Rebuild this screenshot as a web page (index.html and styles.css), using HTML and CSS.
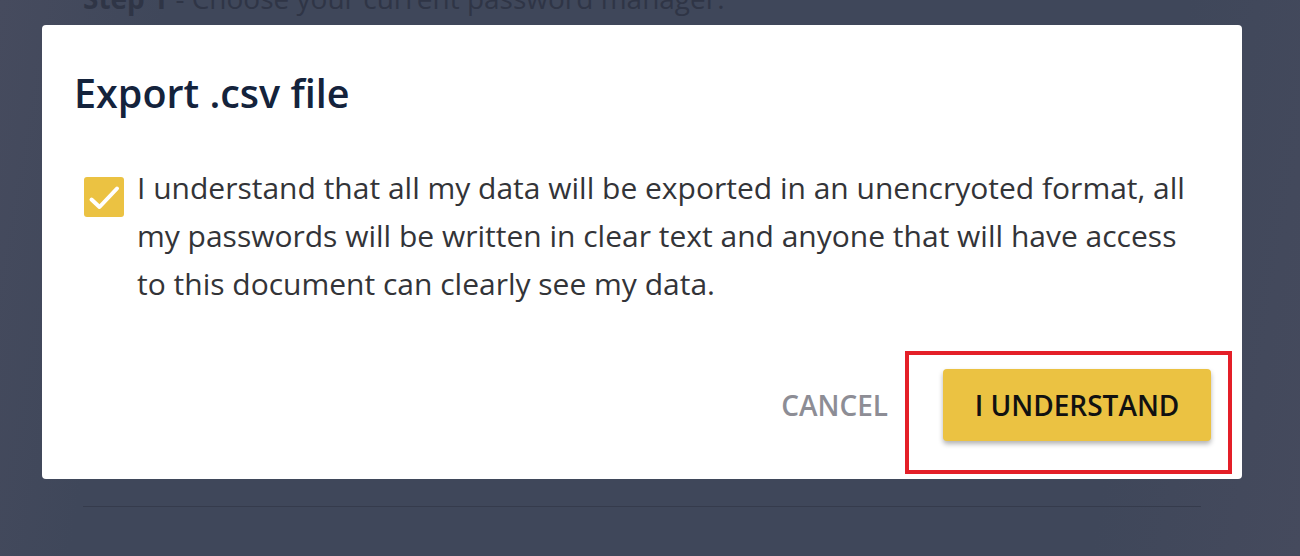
FILE: index.html
```html
<!DOCTYPE html>
<html lang="en">
<head>
<meta charset="utf-8">
<title>Export .csv file</title>
<link rel="stylesheet" href="styles.css">
</head>
<body>
<div class="page">
  <h2 class="step"><b>Step 1</b> - Choose your current password manager.</h2>
  <div class="sep"></div>
</div>
<div class="dialog" role="dialog">
  <h1 class="title">Export .csv file</h1>
  <div class="confirm">
    <span class="check">
      <svg viewBox="0 0 40 40" width="40" height="40"><path d="M7.5 22.5 L15.5 30 L33 11.5" fill="none" stroke="#fff" stroke-width="4" stroke-linecap="round" stroke-linejoin="round"/></svg>
    </span>
    <p class="confirm-text">I understand that all my data will be exported in an unencryoted format, all my passwords will be written in clear text and anyone that will have access to this document can clearly see my data.</p>
  </div>
  <div class="actions">
    <span class="cancel">CANCEL</span>
    <span class="primary-wrap"><span class="primary">I UNDERSTAND</span></span>
  </div>
</div>
</body>
</html>
```
FILE: styles.css
```css
html, body {
  margin: 0;
  height: 100%;
}
body {
  font-family: "Open Sans", "Liberation Sans", sans-serif;
  background: linear-gradient(100deg, #464b5e 0%, #3f475a 12%, #3f475a 85%, #454a5d 100%);
  overflow: hidden;
}
.page {
  padding: 0 99px 0 83px;
}
.step {
  margin: -21px 0 0;
  font-size: 28px;
  line-height: 38px;
  font-weight: 400;
  color: #2f3546;
  white-space: nowrap;
}
.step b {
  font-weight: 700;
}
.sep {
  margin-top: 489px;
  height: 1px;
  background: #353b4c;
}
.dialog {
  position: absolute;
  left: 42px;
  top: 25px;
  width: 1200px;
  height: 454px;
  box-sizing: border-box;
  padding: 41px 31px 0 32px;
  background: #fff;
  border-radius: 4px;
}
.title {
  margin: 0;
  font-size: 39.5px;
  line-height: 54px;
  font-weight: 600;
  color: #14233c;
}
.confirm {
  display: flex;
  align-items: flex-start;
  gap: 13px;
  margin-top: 44px;
}
.check {
  flex: none;
  width: 40px;
  height: 40px;
  margin: 13px 0 0 10px;
  background: #ebc242;
  border-radius: 3px;
  display: flex;
}
.confirm-text {
  margin: 0;
  font-size: 30px;
  line-height: 48px;
  color: #333438;
}
.actions {
  display: flex;
  justify-content: flex-end;
  align-items: center;
  margin-top: 61px;
}
.cancel {
  font-size: 28px;
  font-weight: 600;
  color: #8d8d95;
  margin-right: 55px;
}
.primary-wrap {
  position: relative;
  display: flex;
}
.primary-wrap::after {
  content: "";
  position: absolute;
  left: -38px;
  top: -18px;
  right: -21px;
  bottom: -33px;
  border: 4px solid #e41f28;
  pointer-events: none;
}
.primary {
  display: flex;
  align-items: center;
  justify-content: center;
  width: 268px;
  height: 72px;
  box-sizing: border-box;
  background: #ebc242;
  border-radius: 4px;
  box-shadow: 0 3px 5px rgba(0, 0, 0, 0.3);
  font-size: 28px;
  font-weight: 600;
  color: #111;
}
```
